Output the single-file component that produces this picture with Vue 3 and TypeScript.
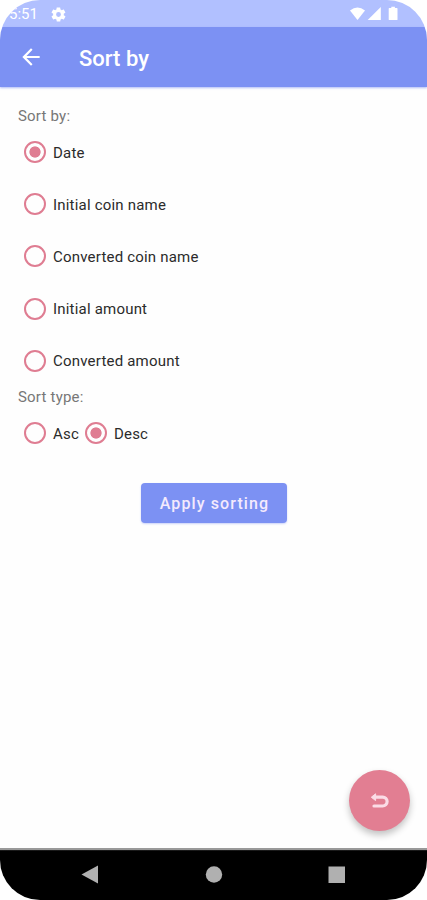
<script setup lang="ts">
import { ref } from 'vue'

interface Option {
  id: string
  label: string
}

const fields: Option[] = [
  { id: 'date', label: 'Date' },
  { id: 'initial-name', label: 'Initial coin name' },
  { id: 'converted-name', label: 'Converted coin name' },
  { id: 'initial-amount', label: 'Initial amount' },
  { id: 'converted-amount', label: 'Converted amount' },
]
const directions: Option[] = [
  { id: 'asc', label: 'Asc' },
  { id: 'desc', label: 'Desc' },
]

const field = ref('date')
const direction = ref('desc')
</script>

<template>
  <div class="screen">
    <div class="status">
      <span class="clock">5:51</span>
      <svg class="gear" viewBox="0 0 24 24" width="17" height="17">
        <path fill="#fff" fill-rule="evenodd" d="M19.4 13c.1-.3.1-.7.1-1s0-.7-.1-1l2.1-1.600c.2-.2.3-.4.1-.7l-2-3.400c-.1-.2-.4-.3-.6-.2l-2.500 1c-.5-.4-1.100-.7-1.700-1l-.4-2.600c0-.3-.2-.5-.5-.5h-4c-.3 0-.5.2-.5.4L9.100 5.100c-.6.2-1.200.6-1.700 1l-2.500-1c-.2-.1-.5 0-.6.2l-2 3.400c-.1.3-.1.5.1.7L4.500 11c0 .3-.1.7-.1 1s0 .7.1 1l-2.100 1.600c-.2.2-.2.4-.1.7l2 3.400c.1.2.4.3.6.2l2.500-1c.5.4 1.100.7 1.700 1l.4 2.600c0 .3.2.5.5.5h4c.3 0 .5-.2.5-.5l.4-2.600c.6-.2 1.200-.6 1.700-1l2.500 1c.2.1.5 0 .6-.2l2-3.400c.1-.2.1-.5-.1-.7zM12 15.400a3.400 3.400 0 1 1 0-6.800 3.400 3.400 0 0 1 0 6.800z" />
      </svg>
      <svg class="signals" viewBox="0 0 50 16" width="50" height="16">
        <path fill="#fff" d="M1 4.500Q8.500-1.500 16 4.500L8.500 14Z" />
        <path fill="#fff" d="M18.700 14L31.800 1V14Z" />
        <path fill="#fff" d="M40.300 2h2V.700h3.600V2h2q.6 0 .6.600V13.400q0 .6-.6.600h-7.600q-.6 0-.6-.6V2.600q0-.6.600-.6Z" />
      </svg>
    </div>
    <header class="bar">
      <svg class="back" viewBox="0 0 24 24" width="26" height="26">
        <path fill="#fff" d="M20 11H7.830l5.590-5.590L12 4l-8 8 8 8 1.410-1.410L7.830 13H20z" />
      </svg>
      <h1 class="title">Sort by</h1>
    </header>
    <main class="content">
      <p class="caption">Sort by:</p>
      <div class="list">
        <label v-for="o in fields" :key="o.id" class="option">
          <input v-model="field" class="radio" type="radio" name="field" :value="o.id" />
          <span class="text">{{ o.label }}</span>
        </label>
      </div>
      <p class="caption">Sort type:</p>
      <div class="row">
        <label v-for="o in directions" :key="o.id" class="option">
          <input v-model="direction" class="radio" type="radio" name="direction" :value="o.id" />
          <span class="text">{{ o.label }}</span>
        </label>
      </div>
      <button class="apply" type="button">Apply sorting</button>
      <button class="fab" type="button" aria-label="Reset">
        <svg viewBox="0 0 20 18" width="20" height="18">
          <path fill="none" stroke="#fbdce6" stroke-width="3.200" stroke-linecap="round" d="M4 5.200H12.700A4.400 4.400 0 0 1 12.700 14H4" />
          <path fill="#fbdce6" stroke="#fbdce6" stroke-linejoin="round" d="M1.300 5.200L5.600 1.800V8.600Z" />
        </svg>
      </button>
    </main>
    <nav class="nav">
      <svg viewBox="0 0 427 50" width="427" height="50">
        <path fill="#b0b0b0" d="M81.500 24.500L98 15.500V33.500Z" />
        <circle fill="#b0b0b0" cx="214" cy="24.500" r="8.200" />
        <rect fill="#b0b0b0" x="328.500" y="16.500" width="16.500" height="16.500" />
      </svg>
    </nav>
  </div>
</template>

<style>
body {
  background: #fff;
}
</style>

<style scoped>
.screen {
  display: flex;
  flex-direction: column;
  width: 427px;
  height: 900px;
  overflow: hidden;
  border-radius: 40px;
  background: #fefefe;
  font-family: Roboto, sans-serif;
}
.status {
  display: flex;
  align-items: center;
  box-sizing: border-box;
  height: 27px;
  padding: 1px 28px 0 9px;
  background: #b1c0ff;
  color: #fff;
}
.clock {
  width: 41px;
  font-size: 15px;
  line-height: 26px;
}
.signals {
  margin-left: auto;
}
.bar {
  display: flex;
  flex: none;
  align-items: center;
  height: 60px;
  padding-left: 18px;
  background: #7c91f3;
  box-shadow: 0 1px 2px #7c91f399;
  color: #fff;
}
.title {
  margin: 3px 0 0 35px;
  font-size: 22px;
  font-weight: 500;
  line-height: 30px;
}
.content {
  display: flex;
  flex: 1;
  flex-direction: column;
  padding: 19px 17px 0 18px;
}
.caption {
  margin: 0;
  color: #777;
  font-size: 15px;
  line-height: 20px;
  letter-spacing: 0.2px;
}
.list {
  display: flex;
  flex-direction: column;
}
.option {
  display: flex;
  align-items: center;
  gap: 7px;
  height: 52.200px;
  color: #2b2b2b;
  font-size: 15px;
  letter-spacing: 0.2px;
}
.text {
  padding-top: 1px;
}
.list,
.row {
  padding-left: 6px;
}
.row {
  display: flex;
  gap: 6px;
}
.radio {
  appearance: none;
  flex: none;
  box-sizing: border-box;
  width: 22px;
  height: 22px;
  margin: 0;
  border: 2px solid #df7d92;
  border-radius: 50%;
}
.radio:checked {
  background: radial-gradient(circle, #df7d92 5.200px, transparent 6px);
}
.apply {
  align-self: center;
  width: 146px;
  height: 40px;
  margin-top: 24px;
  padding: 1px 0 0 1px;
  border: 0;
  border-radius: 4px;
  background: #7c91f3;
  box-shadow: 0 1px 2px #7c91f366;
  color: #f4eafd;
  font-family: inherit;
  font-size: 16px;
  font-weight: 500;
  letter-spacing: 1.100px;
}
.fab {
  display: flex;
  align-items: center;
  align-self: flex-end;
  justify-content: center;
  width: 61px;
  height: 61px;
  margin: auto 0 17px;
  padding: 0;
  border: 0;
  border-radius: 50%;
  background: #e27e92;
  box-shadow: 0 4px 7px #0000003d;
}
.nav {
  flex: none;
  height: 50px;
  border-top: 2px solid #888;
  border-top-color: #999;
  background: linear-gradient(#333, #000 1px);
}
.nav svg {
  display: block;
}
</style>
